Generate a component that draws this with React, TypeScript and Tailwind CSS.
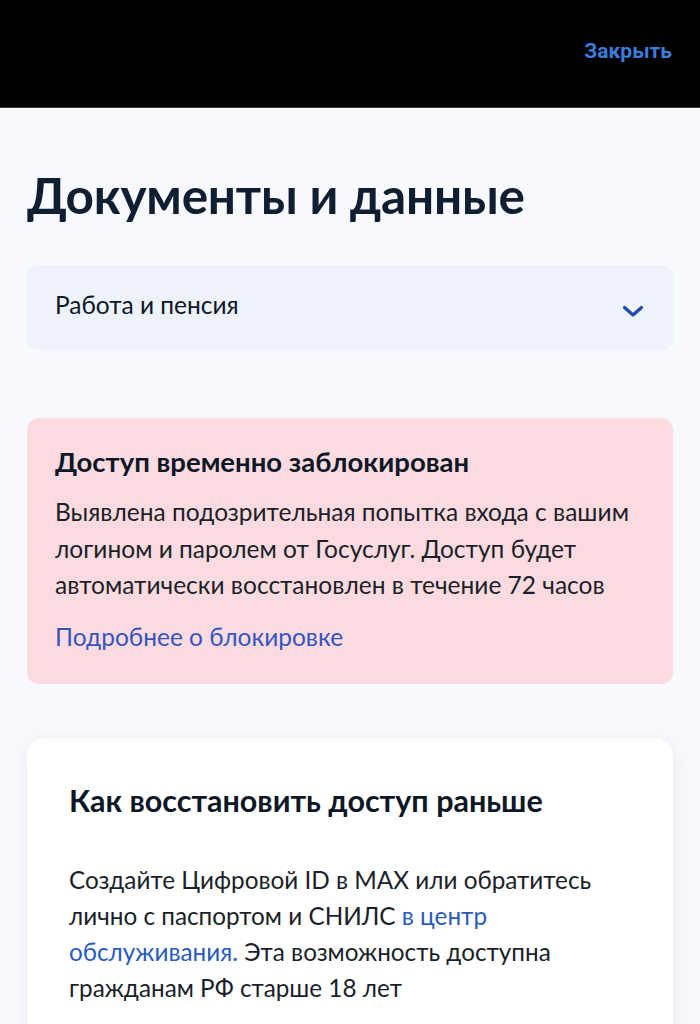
import React from "react";

export default function App() {
  return (
    <div className="min-h-[1024px] w-[700px] bg-[#f8f9fd] overflow-hidden" style={{ fontFamily: "Lato, 'Noto Sans', sans-serif" }}>
      <div className="h-[108px] bg-black flex items-center justify-end pr-[28px] border-b border-[#3a3a3a]">
        <span className="text-[21px] font-bold text-[#3b7ddb] mt-[-3px]" style={{ fontFamily: "Roboto, sans-serif" }}>Закрыть</span>
      </div>
      <div className="px-[27px]">
        <h1 className="mt-[58px] text-[49.5px] leading-[58px] font-bold text-[#0f1e30] tracking-[-0.2px]">Документы и данные</h1>
        <div className="mt-[41px] h-[85px] rounded-[12px] bg-[#edf2fb] flex items-center justify-between pl-[28px] pr-[29px]">
          <span className="text-[24.5px] text-[#0d1726] mt-[-4px]">Работа и пенсия</span>
          <svg width="22" height="13" viewBox="0 0 22 13" className="mt-[8px]">
            <path d="M2.5 2.5 L11 10 L19.5 2.5" fill="none" stroke="#1f4aa8" strokeWidth="3.2" strokeLinecap="round" strokeLinejoin="round" />
          </svg>
        </div>
        <div className="mt-[68px] rounded-[12px] bg-[#fcdbe0] pt-[28px] pb-[29px] pl-[28px] pr-[20px]">
          <div className="text-[27.5px] leading-[32px] font-bold text-[#0d1726]">Доступ временно заблокирован</div>
          <p className="mt-[16px] text-[24.5px] leading-[36.5px] text-[#1a1f29]">
            Выявлена подозрительная попытка входа с вашим логином и паролем от Госуслуг. Доступ будет автоматически восстановлен в течение 72 часов
          </p>
          <div className="mt-[15px] text-[24.5px] leading-[36px] text-[#3555bd]">Подробнее о блокировке</div>
        </div>
        <div className="mt-[54px] rounded-[18px] bg-white shadow-[0_2px_16px_rgba(90,110,160,0.10)] pt-[44px] pb-[40px] px-[42px]">
          <div className="text-[30.5px] leading-[36px] font-bold text-[#0d1726]">Как восстановить доступ раньше</div>
          <p className="mt-[44px] text-[24.3px] leading-[36.3px] text-[#1a1f29]">
            Создайте Цифровой ID в MAX или обратитесь лично с паспортом и СНИЛС <span className="text-[#2a5bbd]">в центр обслуживания.</span> Эта возможность доступна гражданам РФ старше 18 лет
          </p>
        </div>
      </div>
    </div>
  );
}
